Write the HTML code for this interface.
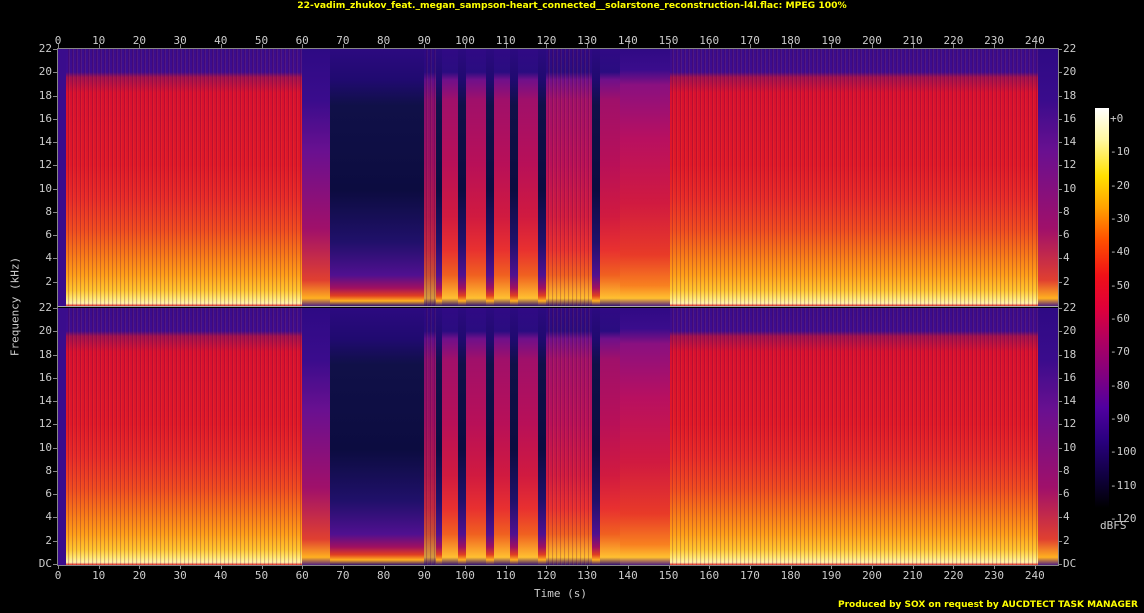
<!DOCTYPE html>
<html><head><meta charset="utf-8"><style>
body{margin:0;background:#000;width:1144px;height:613px;overflow:hidden;position:relative;font-family:"DejaVu Sans Mono","Liberation Mono",monospace;color:#ccc;font-size:11px}
.a{position:absolute;white-space:nowrap}
.ch{position:absolute;left:58px;width:1000px;height:257px;overflow:hidden;background:#2a0a80}
.seg{position:absolute;top:0;height:100%}
.loud{background:linear-gradient(to bottom,#3a0c8c 0%,#3e0c90 9%,#a01050 11%,#d81030 17%,#e01828 45%,#e82a28 58%,#f04a20 70%,#f87818 80%,#ffa018 88%,#ffc830 94%,#ffe870 97%,#fff4b0 99%,#e02020 100%)}
.str::after{content:"";position:absolute;left:0;top:0;right:0;bottom:0;background:repeating-linear-gradient(to right,rgba(0,0,0,0) 0 2px,rgba(80,0,60,.25) 2px 3px,rgba(255,140,40,.1) 3px 4px)}
.quiet{background:linear-gradient(to bottom,#2c0a80 0%,#200a70 12%,#101048 22%,#0c0c40 55%,#20106a 75%,#501090 88%,#a01060 93%,#e04020 96%,#ffb020 98%,#301070 100%)}
.mid{background:linear-gradient(to bottom,#300a84 0%,#2a0c80 9%,#70108a 12%,#a0106a 20%,#b81058 45%,#d01a40 65%,#e83030 78%,#f06020 88%,#ffc030 97%,#301070 100%)}
.tr{background:linear-gradient(to bottom,#2e0a84 0%,#3a0c8c 20%,#6a1090 40%,#a0106a 70%,#e04030 90%,#ffb020 97%,#502080 100%)}
.tr2{background:linear-gradient(to bottom,#300a84 0%,#3a0c8c 8%,#8a1080 14%,#b81060 35%,#d01a40 60%,#e83a28 80%,#f88020 92%,#ffc030 97%,#502080 100%)}
.tk{position:absolute;text-align:right;width:30px}
.tl{position:absolute;width:30px}
.xt{position:absolute;width:30px;text-align:center}
</style></head><body>
<div class="a" style="left:0;width:1144px;top:0;text-align:center;color:#ff0;font-weight:bold;font-family:'DejaVu Sans','Liberation Sans',sans-serif;font-size:9.2px">22-vadim_zhukov_feat._megan_sampson-heart_connected__solarstone_reconstruction-l4l.flac: MPEG 100%</div>

<div class="ch" style="top:49px">
 <div class="seg" style="left:0;width:8px;background:#3a0c8c"></div>
 <div class="seg loud str" style="left:8px;width:236px"></div>
 <div class="seg tr" style="left:244px;width:28px"></div>
 <div class="seg quiet" style="left:272px;width:94px"></div>
 <div class="seg mid str" style="left:366px;width:12px;opacity:.8"></div>
 <div class="seg quiet" style="left:378px;width:6px"></div>
 <div class="seg mid" style="left:384px;width:16px"></div>
 <div class="seg quiet" style="left:400px;width:8px"></div>
 <div class="seg mid" style="left:408px;width:20px"></div>
 <div class="seg quiet" style="left:428px;width:8px"></div>
 <div class="seg mid" style="left:436px;width:16px"></div>
 <div class="seg quiet" style="left:452px;width:8px"></div>
 <div class="seg mid" style="left:460px;width:20px"></div>
 <div class="seg quiet" style="left:480px;width:8px"></div>
 <div class="seg mid str" style="left:488px;width:46px"></div>
 <div class="seg quiet" style="left:534px;width:8px"></div>
 <div class="seg mid" style="left:542px;width:20px"></div>
 <div class="seg tr2" style="left:562px;width:50px"></div>
 <div class="seg loud str" style="left:612px;width:368px"></div>
 <div class="seg tr" style="left:980px;width:20px"></div>
</div>
<div class="ch" style="top:308px">
 <div class="seg" style="left:0;width:8px;background:#3a0c8c"></div>
 <div class="seg loud str" style="left:8px;width:236px"></div>
 <div class="seg tr" style="left:244px;width:28px"></div>
 <div class="seg quiet" style="left:272px;width:94px"></div>
 <div class="seg mid str" style="left:366px;width:12px;opacity:.8"></div>
 <div class="seg quiet" style="left:378px;width:6px"></div>
 <div class="seg mid" style="left:384px;width:16px"></div>
 <div class="seg quiet" style="left:400px;width:8px"></div>
 <div class="seg mid" style="left:408px;width:20px"></div>
 <div class="seg quiet" style="left:428px;width:8px"></div>
 <div class="seg mid" style="left:436px;width:16px"></div>
 <div class="seg quiet" style="left:452px;width:8px"></div>
 <div class="seg mid" style="left:460px;width:20px"></div>
 <div class="seg quiet" style="left:480px;width:8px"></div>
 <div class="seg mid str" style="left:488px;width:46px"></div>
 <div class="seg quiet" style="left:534px;width:8px"></div>
 <div class="seg mid" style="left:542px;width:20px"></div>
 <div class="seg tr2" style="left:562px;width:50px"></div>
 <div class="seg loud str" style="left:612px;width:368px"></div>
 <div class="seg tr" style="left:980px;width:20px"></div>
</div>
<div class="a" style="left:57px;top:48px;width:1000px;height:516px;border:1px solid #888"></div>
<div class="a" style="left:58px;top:306px;width:1000px;height:1px;background:#aaa"></div>

<div class="a" style="left:1095px;top:108px;width:14px;height:400px;background:linear-gradient(to bottom,#fff 0%,#fff8a0 8%,#ffe000 17%,#ffa000 25%,#ff5000 33%,#f01018 42%,#e0003a 50%,#b00060 58%,#800080 67%,#5000a0 75%,#2a0080 83%,#100040 92%,#000 100%)"></div>
<div class="a" style="left:1110px;top:102px;line-height:33.33px">+0<br>-10<br>-20<br>-30<br>-40<br>-50<br>-60<br>-70<br>-80<br>-90<br>-100<br>-110<br>-120</div>
<div class="a" style="left:1100px;top:519px">dBFS</div>

<div id="yl"></div>
<div class="a" style="left:-35px;top:300px;width:100px;transform:rotate(-90deg);text-align:center">Frequency (kHz)</div>
<div class="a" style="left:534px;top:587px">Time (s)</div>
<div class="a" style="left:838px;top:600px;color:#ff0;font-weight:bold;font-family:'DejaVu Sans','Liberation Sans',sans-serif;font-size:9px">Produced by SOX on request by AUCDTECT TASK MANAGER</div>

<script>
var h='';
var ch=[49,308];
for(var c=0;c<2;c++){for(var k=0;k<=22;k+=2){var y=ch[c]+256-k*11.636;var lab=k==0?'DC':k;if(k==0&&c==0)continue;
h+='<div class="tk" style="left:22px;top:'+(y-7)+'px">'+lab+'</div>';
h+='<div class="tl" style="left:1063px;top:'+(y-7)+'px">'+lab+'</div>';
h+='<div class="a" style="left:53px;top:'+y+'px;width:4px;height:1px;background:#888"></div>';
h+='<div class="a" style="left:1058px;top:'+y+'px;width:4px;height:1px;background:#888"></div>';}}
for(var t=0;t<=240;t+=10){var x=58+t*4.07;
h+='<div class="xt" style="left:'+(x-15)+'px;top:34px">'+t+'</div>';
h+='<div class="xt" style="left:'+(x-15)+'px;top:569px">'+t+'</div>';
h+='<div class="a" style="left:'+x+'px;top:44px;width:1px;height:4px;background:#888"></div>';
h+='<div class="a" style="left:'+x+'px;top:565px;width:1px;height:4px;background:#888"></div>';}
document.getElementById('yl').innerHTML=h;
</script>
</body></html>
